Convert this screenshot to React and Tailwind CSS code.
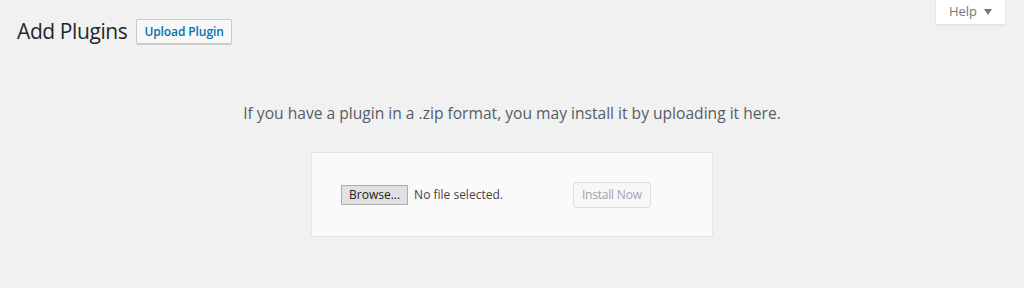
import React from 'react';

const App = () => {
    return (
        <div className="min-h-[288px] w-[1024px] bg-[#f1f1f1] font-['Open_Sans',sans-serif] text-[#23282d]">
            <div className="flex justify-end pr-[18px]">
                <button className="flex h-[25px] items-center gap-[7px] border border-t-0 border-[#e5e5e5] bg-white pl-[13px] pr-[13px] text-[13px] text-[#72777c] shadow-[0_1px_1px_rgba(0,0,0,0.04)]">
                    Help
                    <svg width="8" height="6" viewBox="0 0 8 6">
                        <path d="M0 0 H8 L4 6 Z" fill="#72777c" />
                    </svg>
                </button>
            </div>
            <div className="-mt-[8px] flex items-center gap-[9px] pl-[17px]">
                <h1 className="text-[21px] font-normal leading-[29px] tracking-[-0.4px]">Add Plugins</h1>
                <button className="h-[25px] rounded-[2px] border border-[#ccc] bg-[#f7f7f7] px-[7px] text-[12px] font-semibold tracking-[-0.1px] text-[#0073aa] shadow-[0_1px_0_#ccc]">
                    Upload Plugin
                </button>
            </div>
            <p className="mt-[56px] text-center text-[15.6px] text-[#555d66]">
                If you have a plugin in a .zip format, you may install it by uploading it here.
            </p>
            <div className="mx-auto mt-[27px] flex h-[85px] w-[402px] items-center border border-[#e5e5e5] bg-[#fafafa] pl-[29px]">
                <button className="h-[20px] border border-[#adadad] bg-[#e1e1e1] px-[7px] text-[12px] text-[#222]">
                    Browse...
                </button>
                <span className="ml-[6px] text-[12px] text-[#444]">No file selected.</span>
                <button className="ml-[70px] h-[26px] rounded-[3px] border border-[#ddd] bg-[#f7f7f7] px-[8px] text-[12px] tracking-[-0.2px] text-[#a0a5aa]">
                    Install Now
                </button>
            </div>
        </div>
    );
};

export default App;
